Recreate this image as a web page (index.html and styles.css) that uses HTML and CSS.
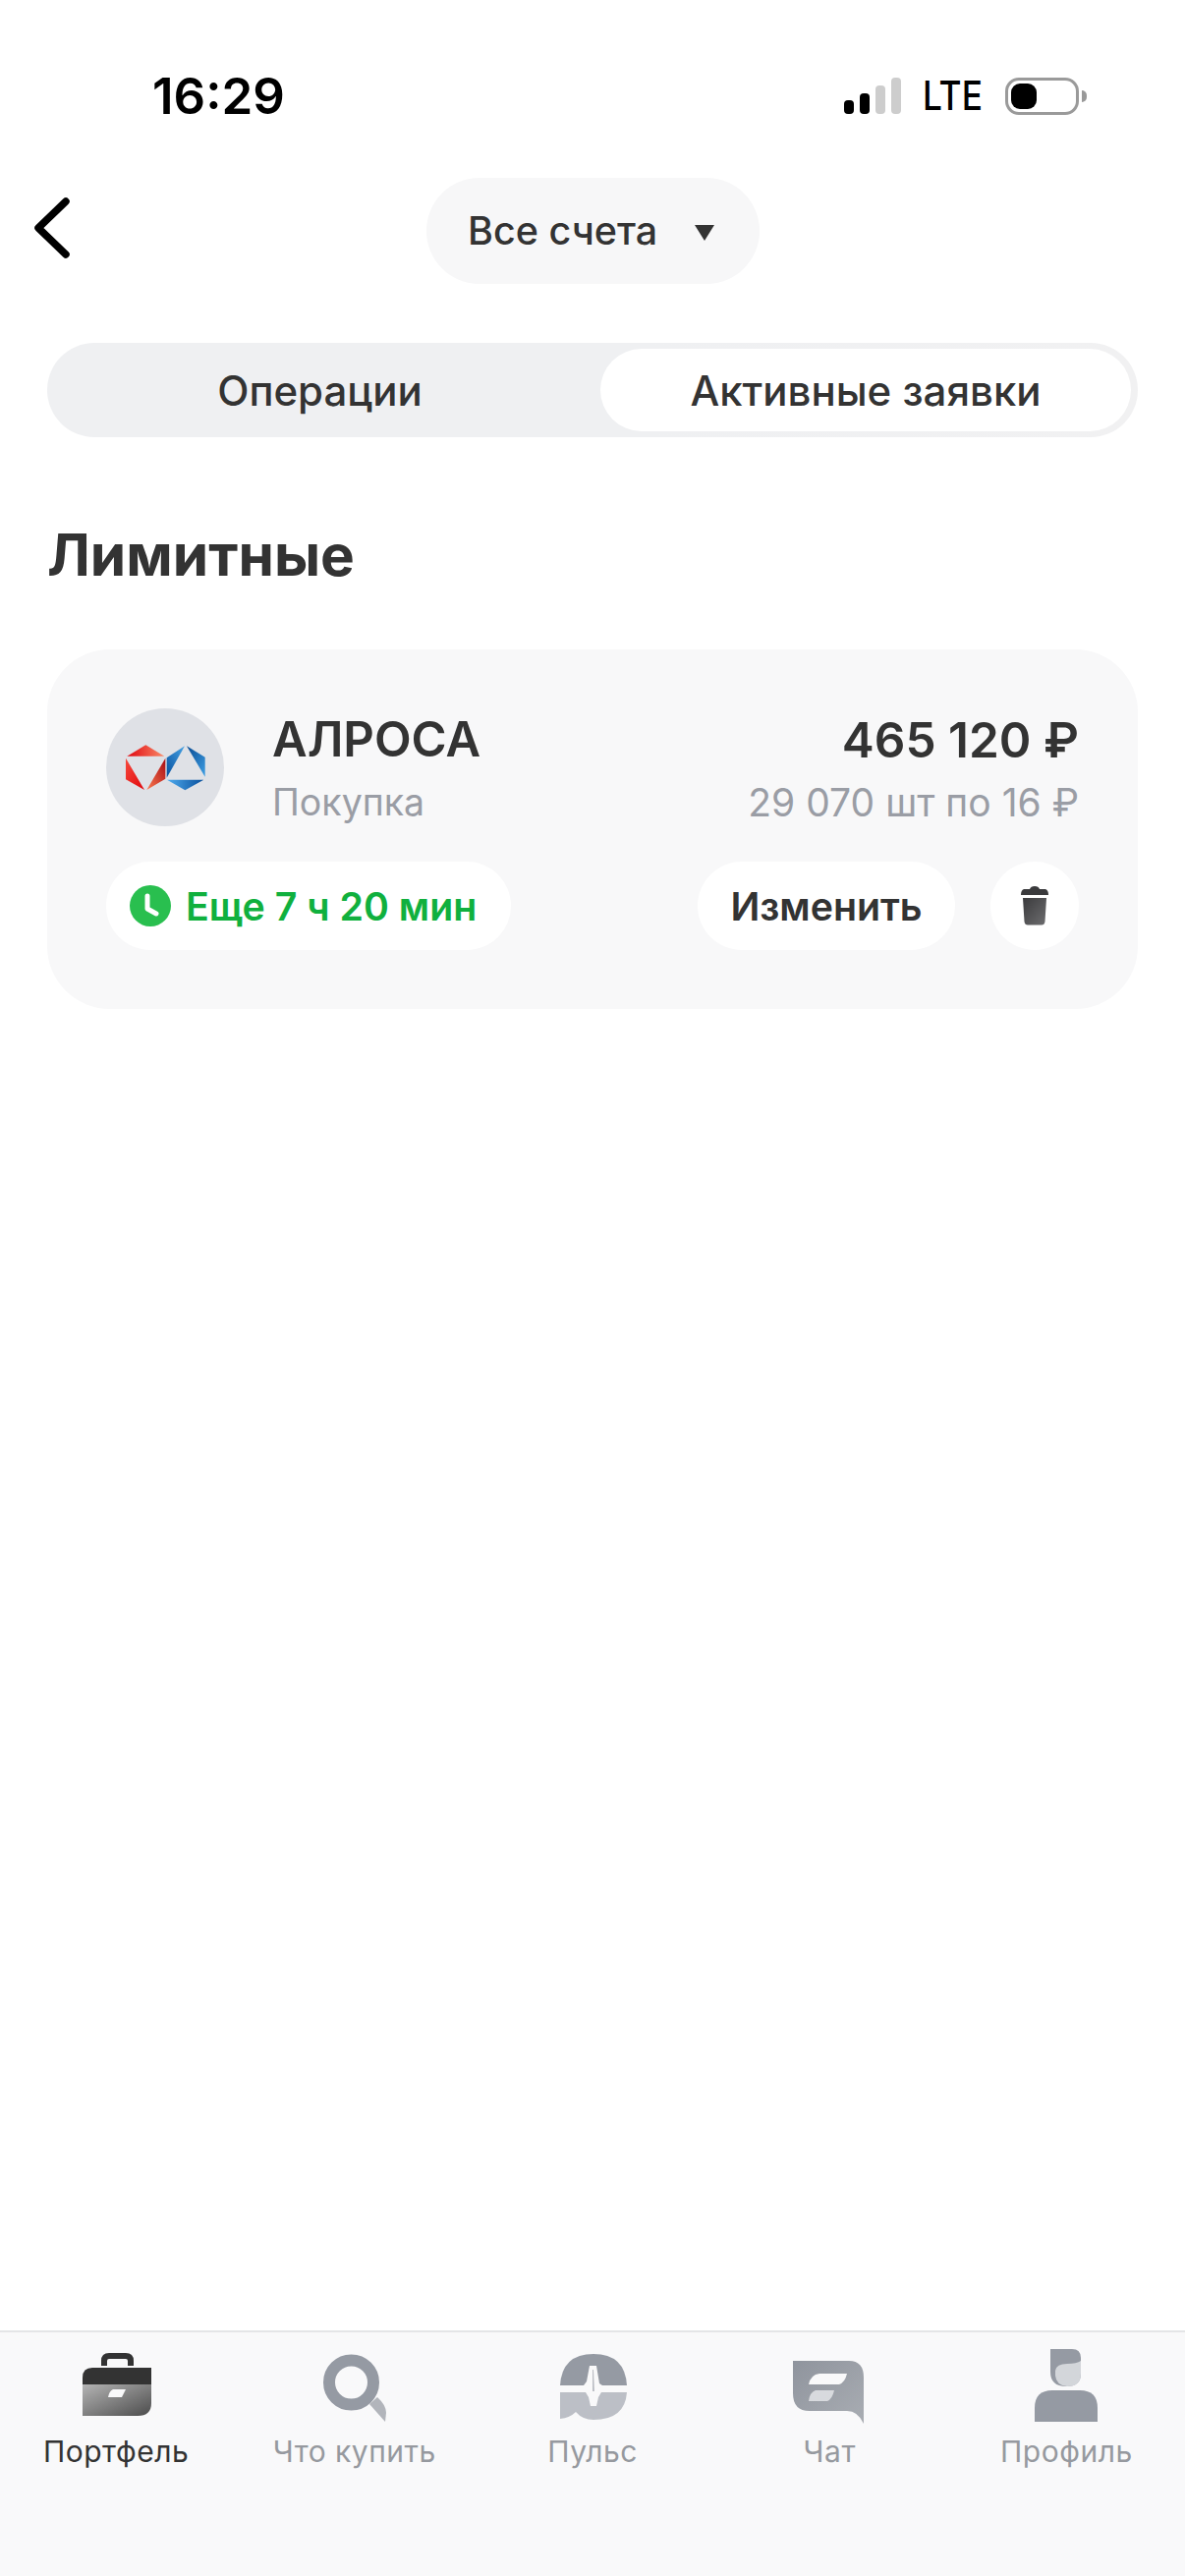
FILE: index.html
```html
<!DOCTYPE html>
<html lang="ru">
<head>
<meta charset="utf-8">
<title>Активные заявки</title>
<link rel="stylesheet" href="styles.css">
</head>
<body>
<div class="screen">
  <div class="status">
    <span class="time">16:29</span>
    <div class="status-right">
      <div class="signal"><i class="b1"></i><i class="b2"></i><i class="b3"></i><i class="b4"></i></div>
      <span class="lte">LTE</span>
      <div class="battery"><div class="battery-level"></div></div>
      <div class="battery-nub"></div>
    </div>
  </div>

  <div class="header">
    <svg class="back" viewBox="0 0 40 62" aria-hidden="true"><path d="M35 4 L7 31 L35 58"/></svg>
    <div class="account"><span>Все счета</span><svg class="caret" viewBox="0 0 20 16"><path d="M0 0H20L10 16Z"/></svg></div>
  </div>

  <div class="tabs">
    <div class="tab tab-off">Операции</div>
    <div class="tab tab-on">Активные заявки</div>
  </div>

  <h1 class="title">Лимитные</h1>

  <div class="card">
    <div class="card-top">
      <div class="avatar">
        <svg viewBox="54 63 360 360" aria-hidden="true">
          <defs>
            <linearGradient id="r1" x1="0" y1="0" x2="1" y2="0"><stop offset="0" stop-color="#e0060f"/><stop offset="1" stop-color="#f98a68"/></linearGradient>
            <linearGradient id="r2" x1="0" y1="0" x2="1" y2="1"><stop offset="0" stop-color="#f6493d"/><stop offset="1" stop-color="#e0060c"/></linearGradient>
            <linearGradient id="r3" x1="1" y1="0" x2="0" y2="1"><stop offset="0" stop-color="#a80a12"/><stop offset="1" stop-color="#fb7a50"/></linearGradient>
            <linearGradient id="b1" x1="1" y1="0" x2="0" y2="1"><stop offset="0" stop-color="#45a2e4"/><stop offset="1" stop-color="#08509e"/></linearGradient>
            <linearGradient id="b2" x1="0" y1="0" x2="1" y2="1"><stop offset="0" stop-color="#084a92"/><stop offset="1" stop-color="#3e9fe4"/></linearGradient>
            <linearGradient id="b3" x1="0" y1="0" x2="1" y2="0"><stop offset="0" stop-color="#4fabee"/><stop offset="1" stop-color="#084f9c"/></linearGradient>
          </defs>
          <path fill="url(#r1)" d="M175 175L232 209H118Z"/>
          <path fill="url(#r2)" d="M114 215L171 312L114 280Z"/>
          <path fill="url(#r3)" d="M235 215V278L178 312Z"/>
          <path fill="url(#b1)" d="M294 178L239 214V275Z"/>
          <path fill="url(#b2)" d="M300 178L356 212V272Z"/>
          <path fill="url(#b3)" d="M240 281H352L295 313Z"/>
        </svg>
      </div>
      <div class="names">
        <div class="name">АЛРОСА</div>
        <div class="muted kind">Покупка</div>
      </div>
      <div class="amounts">
        <div class="name sum">465 120 ₽</div>
        <div class="muted">29 070 шт по 16 ₽</div>
      </div>
    </div>
    <div class="card-actions">
      <div class="pill timer">
        <svg class="clock" viewBox="0 0 42 42" aria-hidden="true"><circle cx="21" cy="21" r="21"/><path d="M18 11 V24 L27 29"/></svg>
        <span>Еще 7 ч 20 мин</span>
      </div>
      <div class="pill change">Изменить</div>
      <div class="pill trash">
        <svg viewBox="0 0 28 40" aria-hidden="true">
          <defs><linearGradient id="tg" x1="0" y1="0" x2="1" y2="1"><stop offset="0" stop-color="#3a3a3c"/><stop offset="1" stop-color="#6e6e70"/></linearGradient></defs>
          <path fill="#3a3a3c" d="M9 3Q10 0 14 0Q18 0 19 3H25Q28 4 28 9H0Q0 4 3 3Z"/>
          <path fill="url(#tg)" d="M2 12H26L24.500 36Q24 39.500 21 39.500H7Q4 39.500 3.500 36Z"/>
        </svg>
      </div>
    </div>
  </div>

  <nav class="tabbar">
    <div class="nav-item active">
      <svg viewBox="0 0 80 80" aria-hidden="true">
        <defs><linearGradient id="bc" x1="0" y1="0" x2="1" y2="1"><stop offset="0" stop-color="#b4b4b4"/><stop offset="1" stop-color="#4c4c4c"/></linearGradient></defs>
        <path fill="none" stroke="#333" stroke-width="6" d="M28 18V13Q28 8 33 8H50Q55 8 55 13V18"/>
        <path fill="#333" d="M6 37V30Q6 20 16 20H76V37Z"/>
        <path fill="url(#bc)" d="M6 37H76V56Q76 69 62 69H6Z"/>
        <path fill="#f9f9fa" d="M37 42H50L46 50H32Q33 44 37 42Z"/>
      </svg>
      <span>Портфель</span>
    </div>
    <div class="nav-item">
      <svg viewBox="0 0 80 80" aria-hidden="true">
        <path fill="#b2b5bb" d="M55 57L63 50Q72 58 72 66L71 75Z"/>
        <circle cx="36.500" cy="35" r="22.500" fill="none" stroke="#959aa3" stroke-width="12"/>
      </svg>
      <span>Что купить</span>
    </div>
    <div class="nav-item">
      <svg viewBox="0 0 80 80" aria-hidden="true">
        <path fill="#959aa3" d="M7 38Q9 6 41 6Q73 6 75 38Z"/>
        <path fill="#bcbfc6" d="M7 45H75Q73 73 41 73Q30 73 23 65Q17 71 7 72Z"/>
        <path fill="#f9f9fa" d="M7 38H31L34 34L37 18H44L47 36L50 38H75V45H49L46 50L44 59H38L36 50L33 45H7Z"/>
        <path fill="#959aa3" d="M40.400 22H41L41.600 44H40.400Z"/>
      </svg>
      <span>Пульс</span>
    </div>
    <div class="nav-item">
      <svg viewBox="0 0 80 80" aria-hidden="true">
        <defs><linearGradient id="ch" x1="0" y1="0" x2="1" y2="1"><stop offset="0" stop-color="#8f949d"/><stop offset="1" stop-color="#a9adb3"/></linearGradient></defs>
        <path fill="url(#ch)" d="M3 13H60Q75 13 75 30V77Q69 64 58 64H20Q3 64 3 46Z"/>
        <path fill="#f9f9fa" d="M30 26H58Q56 35 50 37H19Q21 27 30 26Z"/>
        <path fill="#d8dade" d="M26 43H45Q43 52 38 54H19Q20 45 26 43Z"/>
      </svg>
      <span>Чат</span>
    </div>
    <div class="nav-item">
      <svg viewBox="0 0 80 80" aria-hidden="true">
        <path fill="#959aa3" d="M24 1H46Q55 1 55 10V26Q55 39 40 39Q24 39 24 24Z"/>
        <path fill="#d3d6da" d="M55 13V26Q55 39 41 39Q30 38 29 28V23Q30 16 41 16Q51 16 55 13Z"/>
        <path fill="#959aa3" d="M8 75V61Q8 43 26 43H54Q72 43 72 61V75Z"/>
      </svg>
      <span>Профиль</span>
    </div>
  </nav>
</div>
</body>
</html>
```
FILE: styles.css
```css
* { box-sizing: border-box; }
html, body { margin: 0; padding: 0; }
body {
  width: 1206px;
  height: 2622px;
  background: #fff;
  color: #333;
  font-family: Inter, "Noto Sans", sans-serif;
  overflow: hidden;
}
.screen {
  width: 1206px;
  height: 2622px;
  display: flex;
  flex-direction: column;
}

/* status bar */
.status {
  height: 181px;
  padding: 72px 0 0 155px;
  display: flex;
  justify-content: space-between;
  align-items: flex-start;
}
.time {
  font-size: 51px;
  line-height: 52px;
  font-weight: 600;
  color: #000;
}
.status-right {
  display: flex;
  align-items: flex-start;
  padding-right: 100px;
  padding-top: 7px;
}
.signal { display: flex; align-items: flex-end; gap: 6px; height: 37px; }
.signal i { display: block; width: 10px; border-radius: 4px; background: #000; }
.signal .b1 { height: 14px; }
.signal .b2 { height: 21px; }
.signal .b3 { height: 29px; background: #cdcdcd; }
.signal .b4 { height: 37px; background: #cdcdcd; }
.lte {
  font-size: 41px;
  line-height: 37px;
  font-weight: 500;
  color: #000;
  margin-left: 22px;
  margin-right: 24px;
  transform: scaleX(0.86);
  transform-origin: left center;
  width: 60px;
}
.battery {
  width: 75px;
  height: 38px;
  border: 3px solid #9a9a9a;
  border-radius: 14px;
  padding: 3px;
}
.battery-level { width: 26px; height: 26px; background: #000; border-radius: 9px; }
.battery-nub {
  width: 5px;
  height: 12px;
  margin: 13px 0 0 3px;
  background: #999;
  border-radius: 0 6px 6px 0;
}

/* header */
.header {
  height: 108px;
  position: relative;
  display: flex;
  justify-content: center;
}
.back {
  position: absolute;
  left: 32px;
  top: 20px;
  width: 40px;
  height: 62px;
  fill: none;
  stroke: #000;
  stroke-width: 7.500;
  stroke-linecap: round;
  stroke-linejoin: round;
}
.account {
  width: 339px;
  height: 108px;
  margin-left: 1px;
  background: #f7f7f8;
  border-radius: 54px;
  display: flex;
  align-items: center;
  padding-left: 42px;
  font-size: 39.500px;
  font-weight: 500;
}
.caret { width: 20px; height: 16px; margin-left: 38px; margin-top: 3px; fill: #333; }

/* segmented control */
.tabs {
  margin: 60px 48px 0;
  height: 96px;
  padding: 6px 7px 6px 6px;
  border-radius: 48px;
  background: linear-gradient(90deg, #eff0f2 55%, #f1f1f2 100%);
  display: flex;
  font-size: 42px;
  font-weight: 500;
}
.tab { display: flex; align-items: center; justify-content: center; }
.tab-off { flex: 1; padding-right: 14px; }
.tab-on { width: 540px; background: #fff; border-radius: 42px; }

/* title */
.title {
  margin: 85px 48px 61px;
  font-size: 58.500px;
  line-height: 70px;
  font-weight: 700;
  color: #333;
}

/* card */
.card {
  margin: 0 48px;
  padding: 60px;
  height: 366px;
  background: #f8f8f9;
  border-radius: 64px;
  display: flex;
  flex-direction: column;
  gap: 36px;
}
.card-top { display: flex; align-items: flex-start; height: 120px; }
.avatar { width: 120px; height: 120px; border-radius: 50%; background: #dfe1e6; flex: none; }
.avatar svg { display: block; width: 120px; height: 120px; }
.names { margin-left: 49px; flex: 1; }
.amounts { text-align: right; }
.name { font-size: 49px; line-height: 58px; font-weight: 600; color: #333; margin-top: 3px; }
.sum { font-size: 49.500px; }
.muted { font-size: 39px; line-height: 46px; font-weight: 400; color: #9a9da5; margin-top: 12px; }
.kind { font-size: 37.500px; }
.card-actions { display: flex; align-items: center; }
.pill {
  height: 90px;
  background: #fff;
  border-radius: 45px;
  display: flex;
  align-items: center;
  font-size: 39.300px;
  font-weight: 600;
}
.timer { width: 412px; padding-left: 24px; color: #10b03e; gap: 15px; margin-right: auto; }
.clock { width: 42px; height: 42px; }
.clock circle { fill: #29bf4f; }
.clock path { fill: none; stroke: #fff; stroke-width: 5; stroke-linejoin: round; stroke-linecap: round; }
.change { width: 262px; justify-content: center; color: #333; margin-right: 36px; }
.trash { width: 90px; justify-content: center; }
.trash svg { width: 28px; height: 40px; }

/* tab bar */
.tabbar {
  margin-top: auto;
  height: 250px;
  border-top: 2px solid #e4e5e7;
  background: #f9f9fa;
  display: grid;
  grid-template-columns: repeat(5, 1fr);
  padding-top: 16px;
}
.nav-item {
  display: flex;
  flex-direction: column;
  align-items: center;
  font-size: 30px;
  line-height: 40px;
  letter-spacing: 0.5px;
  color: #96999f;
}
.nav-item.active { color: #333; padding-right: 5px; }
.nav-item:nth-child(2) { padding-right: 2px; }
.nav-item svg { width: 80px; height: 80px; margin-bottom: 5px; }
```
